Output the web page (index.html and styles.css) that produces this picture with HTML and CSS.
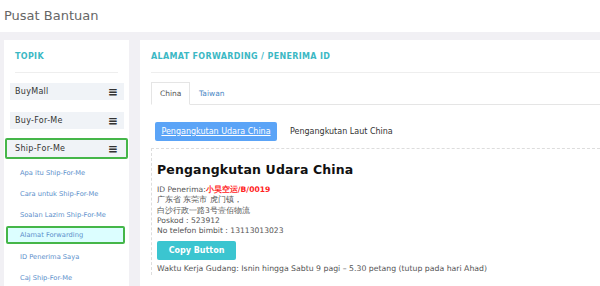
FILE: index.html
```html
<!DOCTYPE html>
<html lang="ms">
<head>
    <meta charset="UTF-8">
    <title>Pusat Bantuan</title>
    <link rel="stylesheet" href="styles.css">
</head>
<body>
    <div class="topbar">Pusat Bantuan</div>
    <div class="page">
        <div class="sidebar">
            <div class="card-title">TOPIK</div>
            <div class="menu">
                <div class="menu-item"><span>BuyMall</span><span class="bars">&#8801;</span></div>
                <div class="menu-item"><span>Buy-For-Me</span><span class="bars">&#8801;</span></div>
                <div class="menu-item active"><span>Ship-For-Me</span><span class="bars">&#8801;</span></div>
            </div>
            <ul class="submenu">
                <li>Apa itu Ship-For-Me</li>
                <li>Cara untuk Ship-For-Me</li>
                <li>Soalan Lazim Ship-For-Me</li>
                <li class="current">Alamat Forwarding</li>
                <li>ID Penerima Saya</li>
                <li>Caj Ship-For-Me</li>
            </ul>
        </div>
        <div class="main">
            <div class="card-title">ALAMAT FORWARDING / PENERIMA ID</div>
            <div class="tabs">
                <div class="tab selected">China</div>
                <div class="tab">Taiwan</div>
            </div>
            <div class="subtabs">
                <a class="subtab on">Pengangkutan Udara China</a>
                <a class="subtab">Pengangkutan Laut China</a>
            </div>
            <div class="address">
                <h2>Pengangkutan Udara China</h2>
                <p>ID Penerima:<span class="rid">小昊空运/B/0019</span><br>
                广东省 东莞市 虎门镇，<br>
                白沙行政一路3号壹佰物流<br>
                Poskod : 523912<br>
                No telefon bimbit : 13113013023</p>
                <button class="copy">Copy Button</button>
                <p class="hours">Waktu Kerja Gudang: Isnin hingga Sabtu 9 pagi – 5.30 petang (tutup pada hari Ahad)</p>
            </div>
        </div>
    </div>
</body>
</html>
```

FILE: styles.css
```css
body {
    margin: 0;
    font-family: 'DejaVu Sans', Verdana, sans-serif;
    background-color: #f1f0f4;
    color: #333;
    overflow: hidden;
}
.topbar {
    background-color: white;
    height: 32px;
    line-height: 32px;
    padding-left: 4px;
    font-size: 13px;
    color: #666;
}
.page {
    display: flex;
    gap: 11px;
    padding: 8px 0 0 4px;
}
.sidebar {
    width: 125px;
    flex-shrink: 0;
    background-color: white;
    padding: 0 0 20px;
}
.main {
    flex: 1;
    background-color: white;
    padding-left: 11px;
    min-width: 0;
}
.card-title {
    font-size: 8px;
    font-weight: bold;
    color: #3cb8c4;
    letter-spacing: 0.33px;
    height: 32px;
    line-height: 34px;
    border-bottom: 1px solid #eee;
    margin: 0 11px;
}
.main .card-title {
    margin: 0;
}
.menu {
    padding: 10px 5px 0 6px;
    display: flex;
    flex-direction: column;
    gap: 12px;
}
.menu-item {
    display: flex;
    justify-content: space-between;
    align-items: center;
    height: 17px;
    padding: 0 6px 0 5px;
    background-color: #f0f3f7;
    font-size: 8px;
    letter-spacing: 0.3px;
}
.menu-item.active {
    margin: -3px -4px 0 -5px;
    padding: 0 8px 0 8px;
    height: 17px;
    border: 2px solid #45b649;
    border-radius: 2px;
}
.bars {
    font-size: 12px;
    font-weight: bold;
    color: #333;
}
.submenu {
    list-style: none;
    margin: 4px 0 0;
    padding: 0;
}
.submenu li {
    font-size: 6.7px;
    color: #5b8fcb;
    height: 21px;
    line-height: 21px;
    padding-left: 16px;
}
.submenu li.current {
    margin: 0 4px 3px 2px;
    padding-left: 12px;
    height: 14px;
    line-height: 14px;
    background-color: #dcfeff;
    border: 2px solid #45b649;
    border-radius: 2px;
}
.tabs {
    display: flex;
    margin-top: 9px;
    border-bottom: 1px solid #e5e5e5;
    height: 22px;
}
.tab {
    font-size: 7.5px;
    color: #4a88c5;
    padding: 0 9px;
    line-height: 23px;
}
.tab.selected {
    color: #555;
    border: 1px solid #e5e5e5;
    border-bottom: 1px solid white;
    height: 23px;
    line-height: 22px;
    box-sizing: border-box;
    padding: 0 8px;
    margin-bottom: -1px;
    background-color: white;
    width: 39px;
}
.subtabs {
    display: flex;
    align-items: center;
    gap: 13px;
    padding: 16px 0 0 4px;
    height: 20px;
}
.subtab {
    font-size: 8px;
    color: #333;
}
.subtab.on {
    background-color: #5ba4f7;
    color: white;
    text-decoration: underline;
    border-radius: 2px;
    height: 19px;
    line-height: 19px;
    width: 122px;
    text-align: center;
}
.address {
    margin-top: 7px;
    border-top: 1px dashed #ddd;
    border-left: 1px dashed #ddd;
    padding: 13px 0 0 5px;
}
.address h2 {
    font-size: 12.5px;
    margin: 0;
    color: #111;
    letter-spacing: 0.15px;
}
.address p {
    font-size: 7.6px;
    line-height: 10.3px;
    color: #555;
    margin: 8px 0 0;
}
.rid {
    color: #f22;
    font-weight: bold;
}
.copy {
    margin-top: 5px;
    width: 79px;
    height: 19px;
    border: none;
    border-radius: 2px;
    background-color: #3bc5d0;
    color: white;
    font-family: 'DejaVu Sans', Verdana, sans-serif;
    font-weight: bold;
    font-size: 8px;
    padding: 0;
}
.address p.hours {
    margin-top: 4px;
    font-size: 7.75px;
    white-space: nowrap;
}
```
